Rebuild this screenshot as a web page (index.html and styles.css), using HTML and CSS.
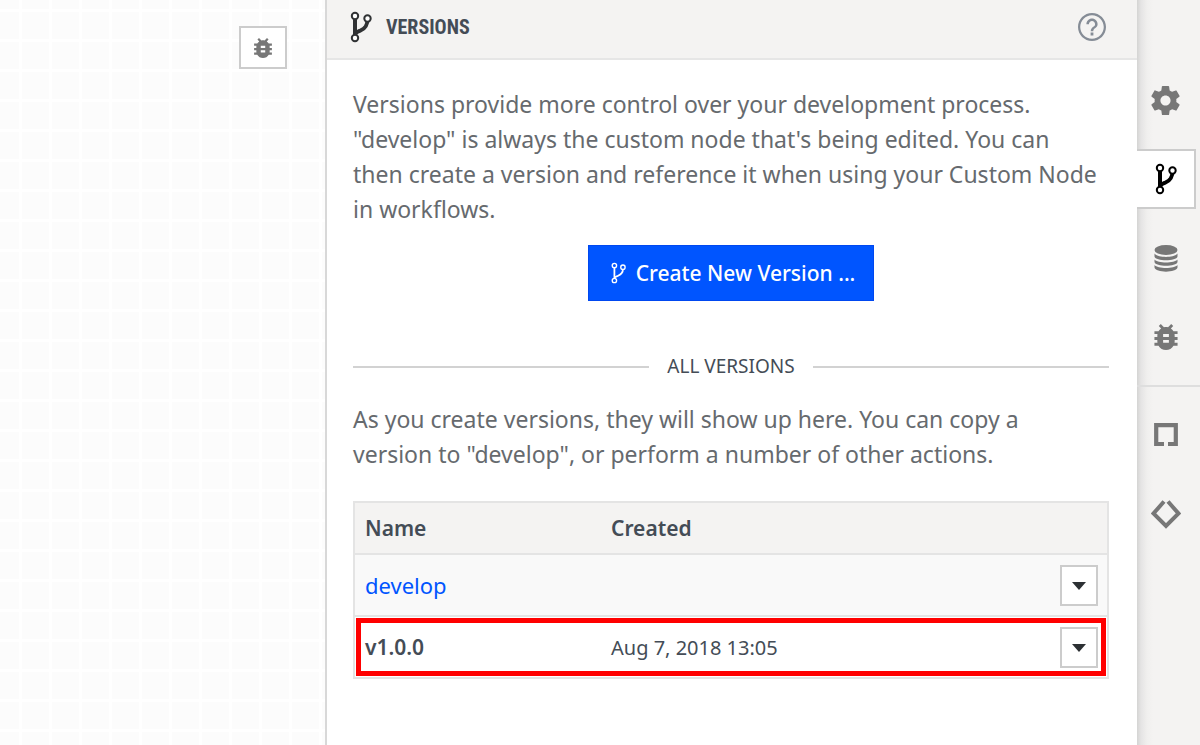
FILE: index.html
```
<!DOCTYPE html>
<html lang="en">
<head>
<meta charset="utf-8">
<title>Versions</title>
<link rel="stylesheet" href="styles.css">
</head>
<body>
<svg class="sprite" aria-hidden="true">
  <symbol id="branch" viewBox="0 0 22 32">
    <path d="M5 6v20M17.500 8c0 7-2.500 9.500-7 11.500C7 21 5 21.500 5 25" fill="none" stroke="currentColor" stroke-width="4"/>
    <g class="node" stroke="currentColor" stroke-width="2"><circle cx="5" cy="5" r="3.200"/><circle cx="17.500" cy="7.500" r="3.200"/><circle cx="5" cy="27" r="3.200"/></g>
  </symbol>
  <symbol id="branch-thin" viewBox="0 0 22 32">
    <path d="M5 8v16M17.500 10.500c0 5.500-2.500 7.500-7 9.500C7 21.500 5 22 5 24" fill="none" stroke="currentColor" stroke-width="2.600"/>
    <g fill="none" stroke="currentColor" stroke-width="2"><circle cx="5" cy="5" r="3.200"/><circle cx="17.500" cy="7.500" r="3.200"/><circle cx="5" cy="27" r="3.200"/></g>
  </symbol>
  <symbol id="bug" viewBox="4 3 16 18">
    <path fill="currentColor" d="M20 8h-2.810c-.450-.780-1.070-1.450-1.820-1.960L17 4.410 15.590 3l-2.170 2.170C12.960 5.060 12.490 5 12 5s-.960.060-1.410.170L8.410 3 7 4.410l1.620 1.630C7.880 6.550 7.260 7.220 6.810 8H4v2h2.090c-.050.330-.090.660-.090 1v1H4v2h2v1c0 .340.040.670.090 1H4v2h2.810c1.040 1.790 2.970 3 5.190 3s4.150-1.210 5.190-3H20v-2h-2.090c.050-.330.090-.660.090-1v-1h2v-2h-2v-1c0-.340-.040-.670-.090-1H20V8zm-6 8h-4v-2h4v2zm0-4h-4v-2h4v2z"/>
  </symbol>
</svg>
<div class="app">
  <main class="canvas">
    <button class="debug" type="button" aria-label="Debug"><svg class="icon-small"><use href="#bug"/></svg></button>
  </main>
  <section class="panel">
    <header class="panel-header">
      <svg class="icon-branch"><use href="#branch"/></svg>
      <h1 class="panel-title">VERSIONS</h1>
      <button class="help" type="button" aria-label="Help">
        <svg class="icon-help" viewBox="2 2 20 20"><path fill="currentColor" d="M11 18h2v-2h-2v2zm1-16C6.480 2 2 6.480 2 12s4.480 10 10 10 10-4.480 10-10S17.520 2 12 2zm0 18.400c-4.630 0-8.400-3.770-8.400-8.400S7.370 3.600 12 3.600s8.400 3.770 8.400 8.400-3.770 8.400-8.400 8.400zM12 6c-2.210 0-4 1.790-4 4h1.800c0-1.210.990-2.200 2.200-2.200s2.200.990 2.200 2.200c0 2-3.100 1.750-3.100 5h1.800c0-2.250 3.100-2.500 3.100-5 0-2.210-1.790-4-4-4z"/></svg>
      </button>
    </header>
    <div class="panel-body">
      <p class="text">Versions provide more control over your development process. "develop" is always the custom node that's being edited. You can<br>then create a version and reference it when using your Custom Node in workflows.</p>
      <button class="create" type="button"><svg class="icon-create"><use href="#branch-thin"/></svg>Create New Version ...</button>
      <h2 class="divider">ALL VERSIONS</h2>
      <p class="text">As you create versions, they will show up here. You can copy a<br>version to "develop", or perform a number of other actions.</p>
      <table class="versions">
        <thead>
          <tr><th class="col-name" scope="col">Name</th><th scope="col">Created</th><td class="col-menu"></td></tr>
        </thead>
        <tbody>
          <tr class="current">
            <td><a class="link" href="#develop">develop</a></td>
            <td></td>
            <td><button class="menu" type="button" aria-label="Actions for develop"><svg class="caret" viewBox="0 0 14 8"><path d="M0 0h14L7 8z"/></svg></button></td>
          </tr>
          <tr class="marked">
            <td><strong>v1.0.0</strong></td>
            <td class="date">Aug 7, 2018 13:05</td>
            <td><button class="menu" type="button" aria-label="Actions for v1.0.0"><svg class="caret" viewBox="0 0 14 8"><path d="M0 0h14L7 8z"/></svg></button></td>
          </tr>
        </tbody>
      </table>
    </div>
  </section>
  <nav class="rail" aria-label="Panels">
    <div class="rail-group">
      <button class="tab" type="button" aria-label="Settings"><svg class="icon-gear" viewBox="2 2 20 20"><path fill="currentColor" d="M19.430 12.980c.040-.320.070-.640.070-.980s-.030-.660-.070-.980l2.110-1.650c.190-.150.240-.420.120-.640l-2-3.460c-.120-.220-.390-.300-.610-.220l-2.490 1c-.520-.400-1.080-.730-1.690-.980l-.380-2.650C14.460 2.180 14.250 2 14 2h-4c-.250 0-.460.180-.490.420l-.380 2.650c-.610.250-1.170.590-1.690.980l-2.490-1c-.230-.090-.490 0-.610.220l-2 3.460c-.130.220-.070.490.120.640l2.110 1.650c-.040.320-.070.650-.070.980s.030.660.070.980l-2.110 1.650c-.190.150-.240.420-.120.640l2 3.460c.120.220.390.300.610.220l2.490-1c.520.400 1.080.730 1.690.980l.380 2.650c.030.240.240.420.490.420h4c.250 0 .460-.180.490-.420l.380-2.650c.610-.250 1.170-.590 1.690-.980l2.490 1c.230.090.490 0 .610-.220l2-3.460c.120-.220.070-.490-.120-.640l-2.110-1.650zM12 15.500c-1.930 0-3.500-1.570-3.500-3.500s1.570-3.500 3.500-3.500 3.500 1.570 3.500 3.500-1.570 3.500-3.500 3.500z"/></svg></button>
      <button class="tab tab-active" type="button" aria-label="Versions"><svg class="icon-branch"><use href="#branch"/></svg></button>
      <button class="tab" type="button" aria-label="Storage"><svg class="icon-data" viewBox="0 0 24 27"><g fill="currentColor"><ellipse cx="12" cy="5" rx="11.500" ry="5"/><path d="M.5 8.500c3 4.500 20 4.500 23 0v3c-1 5-22 5-23 0zM.5 14.500c3 4 20 4 23 0v2.500c-1 5-22 5-23 0zM.5 20c3 4 20 4 23 0v2.500c-1 5.500-22 5.500-23 0z"/></g></svg></button>
      <button class="tab" type="button" aria-label="Debug log"><svg class="icon-bug"><use href="#bug"/></svg></button>
    </div>
    <div class="rail-group rail-group-end">
      <button class="tab" type="button" aria-label="Inputs"><svg class="icon-square" viewBox="0 0 24 24"><path d="M10 21H2.200V2.200h19.600V21H14" fill="none" stroke="currentColor" stroke-width="4.200"/></svg></button>
      <button class="tab" type="button" aria-label="Outputs"><svg class="icon-diamond" viewBox="0 0 30 30"><path d="M13 2.500L2.500 14.500 15 27l12.500-12.500L17 2.500" fill="none" stroke="currentColor" stroke-width="4"/></svg></button>
    </div>
  </nav>
</div>
</body>
</html>
```
FILE: styles.css
```
* { box-sizing: border-box; }

body {
  margin: 0;
  background: #fff;
  color: #444c56;
  font-family: "Noto Sans", "Open Sans", sans-serif;
  font-size: 22px;
  line-height: 35px;
}

button {
  display: flex;
  align-items: center;
  justify-content: center;
  padding: 0;
  border: 0;
  background: none;
  color: inherit;
  font: inherit;
}

svg { display: block; }
.sprite { position: absolute; width: 0; height: 0; }

.app {
  display: grid;
  grid-template-columns: 325fr 812fr 63px;
  min-height: 100vh;
}

.canvas {
  padding: 26px 38px;
  background-color: #fcfcfc;
  background-image:
    linear-gradient(90deg, #fff 3px, transparent 3px),
    linear-gradient(#fff 3px, transparent 3px);
  background-size: 30px 30px;
  background-position: 19px 9px;
}

.debug {
  width: 48px;
  height: 43px;
  margin-left: auto;
  border: 2px solid #ccc;
  background: #fff;
  color: #777;
}

.panel {
  border-left: 2px solid #d8d8d8;
  background: #fff;
}

.panel-header {
  display: flex;
  align-items: center;
  height: 60px;
  padding: 0 31px 4px 23px;
  border-bottom: 2px solid #e6e6e6;
  background: #f4f3f2;
}

.panel-title {
  margin: 0 auto 0 14px;
  font-family: "Roboto Condensed", "Liberation Sans Narrow", "Noto Sans", sans-serif;
  font-size: 20px;
  font-weight: 700;
}

.help { color: #858c96; }

.panel-body { padding: 27px 28px 28px 26px; }

.text { margin: 0; color: #666a6e; font-size: 23px; }

.create {
  gap: 10px;
  height: 56px;
  margin: 18px auto 0;
  padding: 0 18px 0 22px;
  border: 1px solid #0048f0;
  background: #05f;
  color: #fff;
  font-size: 21px;
  font-weight: 500;
}

.divider {
  display: flex;
  align-items: center;
  gap: 18px;
  margin: 48px 0 18px;
  font-size: 19px;
  font-weight: 400;
}

.divider::before,
.divider::after {
  content: "";
  flex: 1;
  height: 2px;
  background: #d2d2d2;
}

.versions {
  width: 100%;
  margin-top: 29px;
  border: 2px solid #e4e4e4;
  border-collapse: collapse;
  table-layout: fixed;
}

.versions th,
.versions td {
  height: 62px;
  padding: 0 10px;
  border-bottom: 2px solid #e4e4e4;
  text-align: left;
}

.versions thead th,
.versions thead td { height: 52px; background: #f4f3f2; }
.versions th,
.versions strong { font-size: 21px; font-weight: 600; }
.versions .date { font-size: 20px; }
.col-name { width: 247px; }
.col-menu { width: 58px; }
.current { background: #f9f9f9; }
.marked { outline: 5px solid #f00; outline-offset: -7px; border-radius: 2px; }
.link { color: #05f; text-decoration: none; }

.menu {
  width: 38px;
  height: 41px;
  margin-left: auto;
  padding-top: 2px;
  border: 2px solid #ccc;
  background: #fff;
  color: #2c3033;
}

.rail {
  padding-top: 70px;
  background: linear-gradient(90deg, #d4d4d3 0, #e5e4e4 4px, #f0efee 10px, #f4f3f2 16px);
  color: #777;
}

.rail-group { display: grid; gap: 19px; }

.rail-group-end {
  margin-top: 18px;
  padding-top: 18px;
  border-top: 2px solid #dedede;
}

.tab { width: 57px; height: 60px; }

.tab-active {
  width: 59px;
  border: 2px solid #ccc;
  border-left: 0;
  background: #fff;
  color: #000;
}

.icon-small { width: 18px; height: 20px; }
.icon-branch { width: 22px; height: 32px; color: #303234; }
.tab-active .icon-branch { color: #000; }
.node { fill: #fff; }
.icon-create { width: 15px; height: 22px; }
.icon-help { width: 28px; height: 28px; }
.icon-gear { width: 29px; height: 29px; }
.icon-data { width: 24px; height: 27px; }
.icon-bug { width: 24px; height: 26px; }
.icon-square { width: 24px; height: 24px; }
.icon-diamond { width: 30px; height: 30px; }
.caret { width: 14px; height: 8px; fill: currentColor; }
```
